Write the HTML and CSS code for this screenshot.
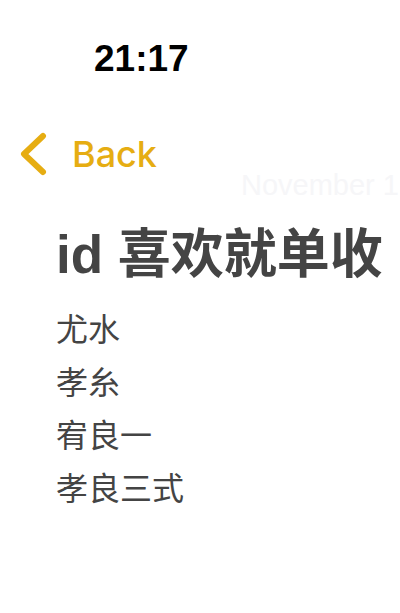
FILE: index.html
```html
<!DOCTYPE html>
<html lang="zh">
<head>
<meta charset="utf-8">
<link rel="stylesheet" href="styles.css">
</head>
<body>
<div class="screen">
  <div class="status">
    <span class="time">21:17</span>
  </div>
  <div class="nav">
    <svg class="chev" width="30" height="44" viewBox="0 0 30 44">
      <polyline points="25,4 6,22 25,40" fill="none" stroke="#e6ad12" stroke-width="6" stroke-linecap="round" stroke-linejoin="round"/>
    </svg>
    <span class="back">Back</span>
  </div>
  <div class="date">November 1</div>
  <div class="content">
    <h1 class="title">id 喜欢就单收</h1>
    <ul class="list">
      <li>尤水</li>
      <li>孝糸</li>
      <li>宥良一</li>
      <li>孝良三式</li>
    </ul>
  </div>
</div>
</body>
</html>
```

FILE: styles.css
```css
html, body {
  margin: 0;
  padding: 0;
  background: #ffffff;
}
.screen {
  width: 400px;
  height: 613px;
  overflow: hidden;
  font-family: "Liberation Sans", "Noto Sans CJK SC", sans-serif;
}
.status {
  height: 80px;
  padding-left: 94px;
  box-sizing: border-box;
}
.time {
  display: block;
  font-family: "Liberation Sans", Arial, sans-serif;
  font-weight: 700;
  font-size: 37px;
  line-height: 40px;
  padding-top: 39px;
  color: #000;
}
.nav {
  display: flex;
  align-items: center;
  margin-top: 52px;
  padding-left: 18px;
  height: 44px;
}
.chev {
  display: block;
}
.back {
  margin-left: 24px;
  font-family: Inter, "Liberation Sans", sans-serif;
  font-weight: 500;
  font-size: 36px;
  color: #e6ad12;
  line-height: 44px;
}
.date {
  margin-top: -6px;
  padding-left: 241px;
  white-space: nowrap;
  font-size: 29px;
  line-height: 30px;
  color: #f6f6f8;
}
.content {
  padding-left: 56px;
}
.title {
  margin: 25px 0 0 0;
  font-family: "Liberation Sans", "Noto Sans CJK SC", sans-serif;
  font-weight: 700;
  font-size: 53px;
  line-height: 60px;
  color: #444444;
  white-space: nowrap;
}
.list {
  list-style: none;
  margin: 16px 0 0 0;
  padding: 0;
}
.list li {
  font-family: "Noto Sans CJK SC", sans-serif;
  font-size: 32px;
  line-height: 53px;
  color: #444444;
}
```
